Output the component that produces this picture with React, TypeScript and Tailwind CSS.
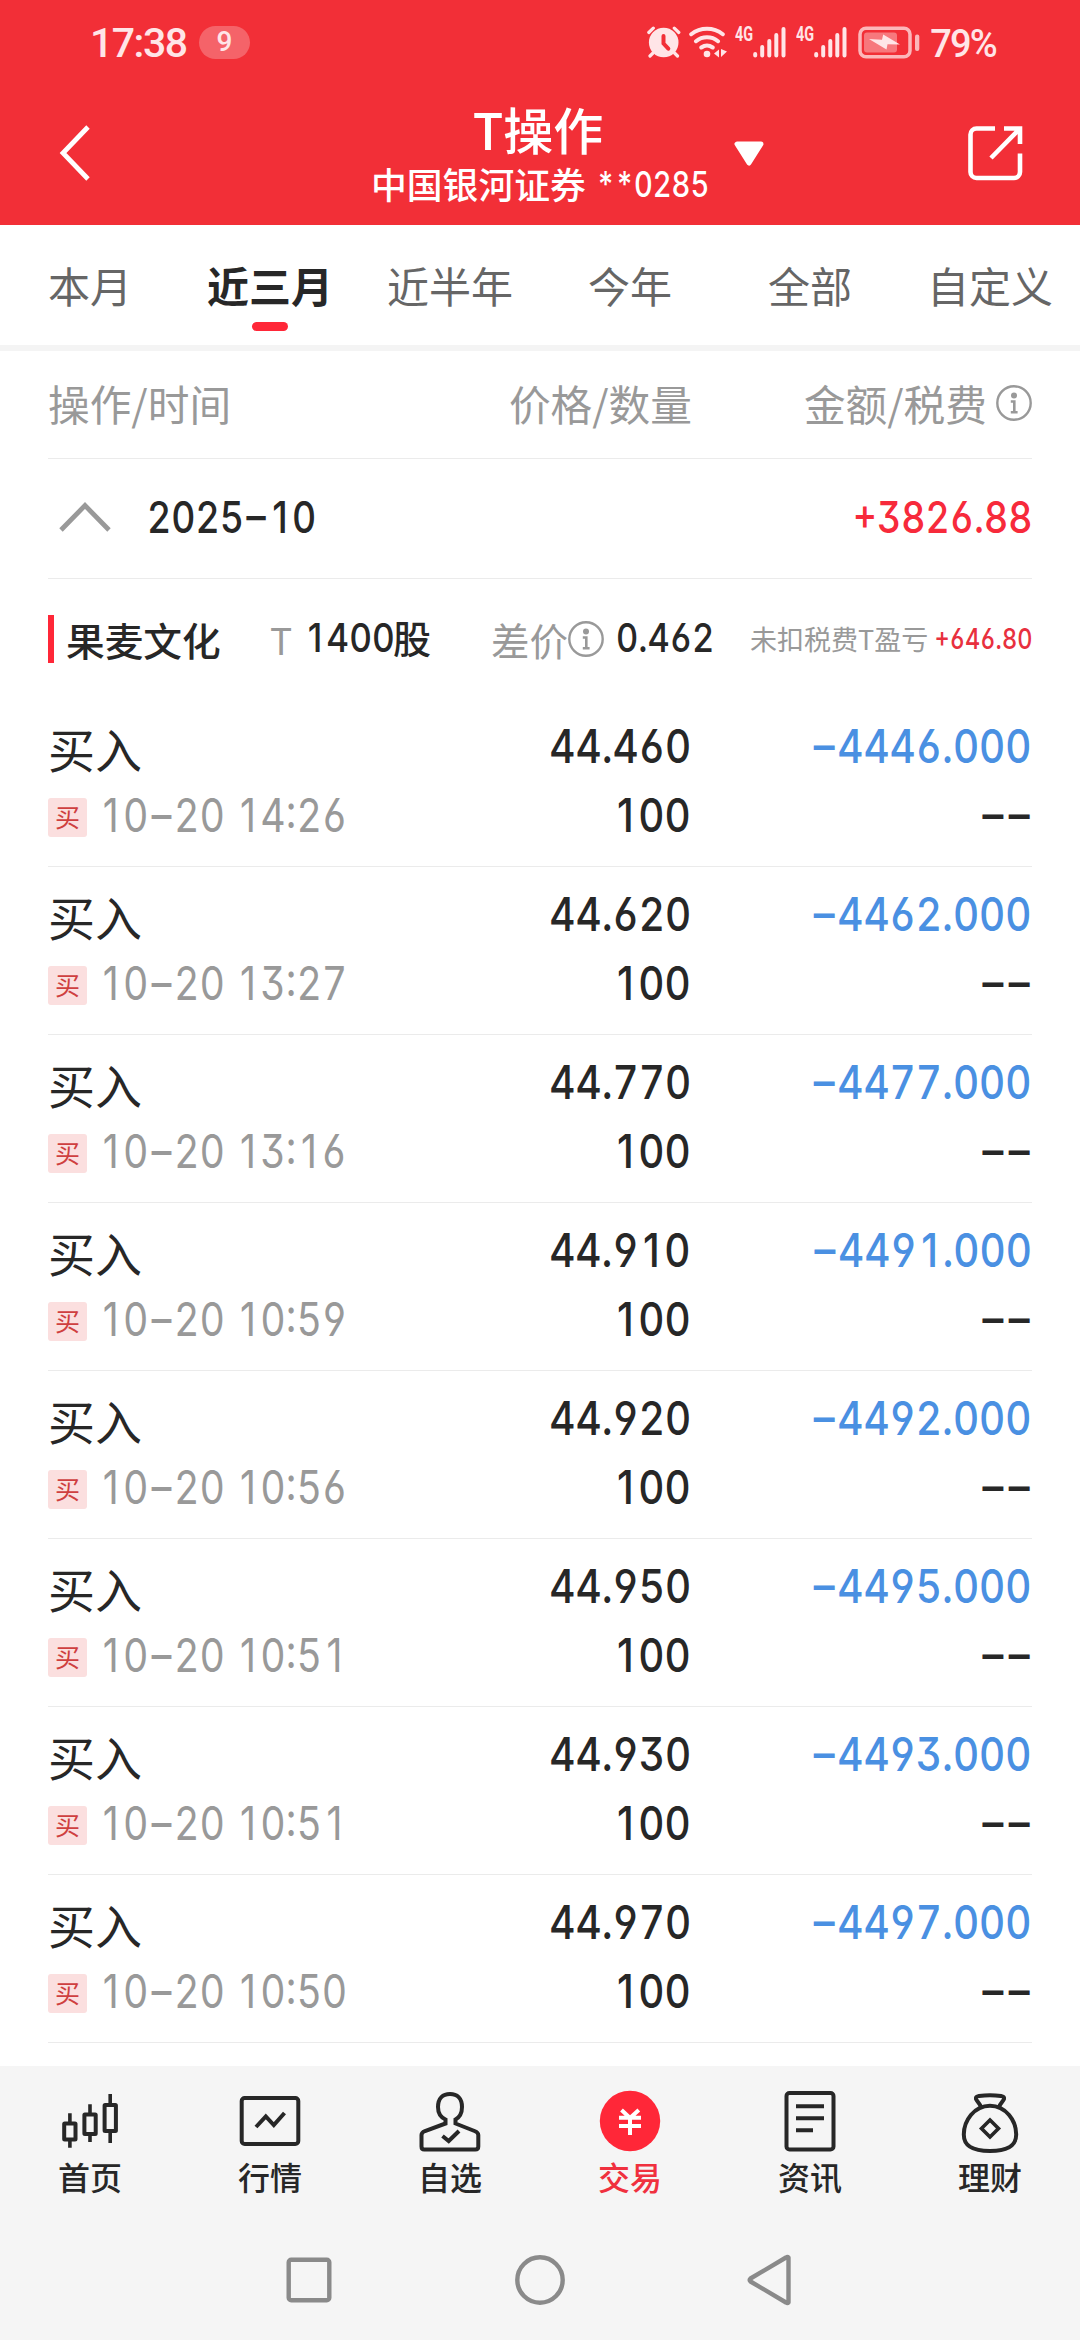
import React from "react";

const CJK = "font-['Noto_Sans_CJK_SC',sans-serif]";
const SYS = "font-['Roboto','Noto_Sans_CJK_SC',sans-serif]";

function Num({ text, className }: { text: string; className: string }) {
  return (
    <span
      className={`inline-block shrink-0 whitespace-nowrap leading-none font-['Inter','Noto_Sans_CJK_SC',sans-serif] [font-feature-settings:'tnum','cv03','cv04','cv09'] ${className}`}
    >
      {text.split(/([1−])/).map((part, i) => {
        if (part === "1")
          return (
            <span key={i} className="inline-block w-[0.635em] pr-[0.11em] text-right [font-feature-settings:'tnum'_0]">
              1
            </span>
          );
        if (part === "−")
          return (
            <span key={i} className="inline-block -translate-y-[0.035em] scale-x-[1.1]">
              −
            </span>
          );
        return part;
      })}
    </span>
  );
}

const tabs = ["本月", "近三月", "近半年", "今年", "全部", "自定义"];

const trades = [
  { time: "10−20 14:26", price: "44.460", amount: "−4446.000" },
  { time: "10−20 13:27", price: "44.620", amount: "−4462.000" },
  { time: "10−20 13:16", price: "44.770", amount: "−4477.000" },
  { time: "10−20 10:59", price: "44.910", amount: "−4491.000" },
  { time: "10−20 10:56", price: "44.920", amount: "−4492.000" },
  { time: "10−20 10:51", price: "44.950", amount: "−4495.000" },
  { time: "10−20 10:51", price: "44.930", amount: "−4493.000" },
  { time: "10−20 10:50", price: "44.970", amount: "−4497.000" },
];

function InfoIcon() {
  return (
    <svg width="36" height="36" viewBox="0 0 36 36" fill="none" stroke="#999" className="shrink-0">
      <circle cx="18" cy="18" r="16.7" strokeWidth="2.4" />
      <circle cx="18" cy="10.6" r="3" fill="#999" stroke="none" />
      <path d="M14.8 16.5h3.500v11M14.800 27.300h6.800" strokeWidth="2.6" />
    </svg>
  );
}

function Signal() {
  return (
    <div className="flex h-[31px]">
      <span className={`${SYS} w-[18px] origin-left scale-x-[0.72] text-[20px] leading-[14px] font-bold`}>4G</span>
      <svg width="33" height="31" viewBox="0 0 33 31" stroke="currentColor" strokeWidth="4" strokeLinecap="round">
        <path d="M2.2 27v1.4M9.2 20v8.4M16.3 14v14.4M23.3 8v20.4M30.5 2v26.4" />
      </svg>
    </div>
  );
}

function StatusBar() {
  return (
    <div className={`${SYS} flex h-[84px] items-center pl-[90px] pr-[84px] text-[#ffe5e7]`}>
      <span className="w-[109px] pt-[3px] text-[41px] leading-none font-medium tracking-[-1.5px]">17:38</span>
      <span className="flex h-[33px] w-[51px] items-center justify-center rounded-full bg-white/25 text-[28px] leading-none font-medium">
        9
      </span>
      <div className="ml-auto flex items-center">
        <svg width="34" height="32" viewBox="0 0 34 32" fill="currentColor" className="mr-[8px]">
          <circle cx="16.7" cy="16.5" r="14.8" />
          <path d="M6 27l-3 3M27.5 27l3 3M1.8 6.5l4.5-4.3M31.8 6.5l-4.5-4.3" stroke="currentColor" strokeWidth="3.2" strokeLinecap="round" />
          <path d="M16.500 10v7.500l4.800 5.200" stroke="#f22f37" strokeWidth="4" fill="none" strokeLinecap="round" />
        </svg>
        <svg width="38" height="32" viewBox="0 0 38 32" fill="none" stroke="currentColor" strokeWidth="4" strokeLinecap="round" className="mr-[8px]">
          <path d="M2.200 8.200A25.500 25.500 0 0 1 33.800 8.200M7 15.200A17.500 17.500 0 0 1 29 15.200M12.300 21.500A10 10 0 0 1 23.700 21.500" />
          <circle cx="18" cy="28" r="3.300" fill="currentColor" stroke="none" />
          <path d="M25 27.500l5-4v8zM32 23v8l6-5.500z" fill="currentColor" stroke="none" />
        </svg>
        <Signal />
        <div className="w-[10px]" />
        <Signal />
        <svg width="62" height="33" viewBox="0 0 62 33" className="mr-[10px] ml-[11px]">
          <rect x="2" y="2.200" width="50" height="28.600" rx="6" fill="none" stroke="currentColor" strokeOpacity=".75" strokeWidth="3.500" />
          <rect x="6" y="6.500" width="33" height="20" rx="3" fill="currentColor" fillOpacity=".4" />
          <path d="M11 13L24 13.800L25.200 8.500L42 18.500L29.500 18.300L28.500 23.500z" fill="currentColor" />
          <rect x="57" y="8.500" width="4.300" height="16.500" rx="2" fill="currentColor" fillOpacity=".75" />
        </svg>
        <span className="pt-[3px] text-[38px] leading-none font-medium tracking-[-1.8px]">79%</span>
      </div>
    </div>
  );
}

function Header() {
  return (
    <header className="h-[225px] shrink-0 bg-[#f22f37] text-white">
      <StatusBar />
      <div className="flex h-[141px] justify-between pr-[57px] pl-[58px]">
        <svg width="34" height="56" viewBox="0 0 34 56" fill="none" stroke="currentColor" strokeWidth="4.800" className="mt-[41px]">
          <path d="M30 2L5 28L30 54" />
        </svg>
        <div className="relative flex w-[360px] flex-col items-center pl-[20px]">
          <div className={`${CJK} mt-[17px] h-[54px] pr-[4px] text-[50px] leading-[54px] font-medium`}>T操作</div>
          <div className="mt-[7px] flex h-[44px] w-[338px] items-center">
            <span className={`${CJK} w-[222px] shrink-0 text-[35.800px] leading-none font-medium whitespace-nowrap`}>中国银河证券</span>
            <Num text="**0285" className="origin-left scale-x-[0.83] pl-[4px] text-[35px] font-medium" />
          </div>
          <svg width="30" height="25" viewBox="0 0 30 25" className="absolute top-[57px] left-[384px]">
            <path d="M3 3h24L15 22z" fill="white" stroke="white" strokeWidth="5" strokeLinejoin="round" />
          </svg>
        </div>
        <svg width="55" height="55" viewBox="0 0 55 55" fill="none" stroke="currentColor" strokeWidth="4.600" className="mt-[42px]">
          <path d="M27 2.500H8.500a6 6 0 0 0-6 6V46a6 6 0 0 0 6 6H46a6 6 0 0 0 6-6V27.500M36 2.500h16V18M52 2.500L23 32" />
        </svg>
      </div>
    </header>
  );
}

function Trade({ t }: { t: (typeof trades)[number] }) {
  return (
    <div className="grid h-[168px] grid-cols-[300px_343px_1fr] border-b border-[#ebebeb]">
      <div className="flex flex-col">
        <div className={`${CJK} mt-[24px] h-[50px] text-[47px] leading-[50px] text-[#272727]`}>买入</div>
        <div className="mt-[22px] flex h-[44px] items-center">
          <span className={`${CJK} flex size-[39px] shrink-0 items-center justify-center rounded-[3px] bg-[#fbdfdf] text-[25px] leading-none text-[#cf3f40]`}>
            <span className="-mt-[2px]">买</span>
          </span>
          <Num text={t.time} className="-mt-[3px] ml-[11px] origin-left scale-x-[0.845] text-[46.500px] text-[#999]" />
        </div>
      </div>
      <div className="flex flex-col items-end text-[#272727]">
        <Num text={t.price} className="mt-[24px] h-[47px] origin-right scale-x-[0.870] text-[46.500px] font-medium" />
        <Num text="100" className="mt-[22px] origin-right scale-x-[0.870] text-[46.500px] font-medium" />
      </div>
      <div className="flex flex-col items-end text-[#4a90e2]">
        <Num text={t.amount} className="mt-[24px] h-[47px] origin-right scale-x-[0.870] text-[46.500px] font-medium" />
        <Num text="−−" className="mt-[22px] origin-right scale-x-[0.870] text-[46.500px] font-medium text-[#272727]" />
      </div>
    </div>
  );
}

const navItems: { label: string; active?: boolean; icon: React.ReactNode }[] = [
  {
    label: "首页",
    icon: (
      <>
        <rect x="10.200" y="37.500" width="11.300" height="16" rx="0.500" />
        <rect x="30.400" y="28.500" width="11.300" height="19.500" rx="0.500" />
        <rect x="50.600" y="19" width="11.300" height="26" rx="0.500" />
        <path d="M15.900 27.300V37M15.900 54v7.700M36 18.300V28M36 48v8M56.200 8v11M56.200 45v12" strokeWidth="3.600" />
      </>
    ),
  },
  {
    label: "行情",
    icon: (
      <>
        <rect x="7.700" y="12" width="56.600" height="46" rx="3" />
        <path d="M22 41L31.800 30.500L39.800 39L50.500 27" />
      </>
    ),
  },
  {
    label: "自选",
    icon: (
      <>
        <path d="M31.500 36.500V33.500C26 31 24 27 24 21C24 12 29 8 36 8C43 8 48 12 48 21C48 27 46 31 41.500 33.500V37.500L60.500 45Q64.300 46.500 64.300 49V60.500Q64.300 63.500 61.300 63.500H10.200Q7.500 63.500 7.500 60.500V49Q7.500 46.500 11 45L31.500 37.500V36" />
        <path d="M28.500 50L34.700 55L45 45" />
      </>
    ),
  },
  {
    label: "交易",
    active: true,
    icon: (
      <>
        <circle cx="36" cy="35" r="30.200" fill="#ff2738" stroke="none" />
        <path d="M27.500 24L36 32L44.800 24M25 31.800h22M25 40h22M36 31v18" stroke="#fff" />
      </>
    ),
  },
  {
    label: "资讯",
    icon: (
      <>
        <rect x="12.500" y="7" width="47" height="56.500" rx="3" />
        <path d="M22 20.300h28M22 32.300h28M22 44.200h17" />
      </>
    ),
  },
  {
    label: "理财",
    icon: (
      <>
        <path d="M27 21C25.500 17 23 15.500 22 13C21.500 10.500 23 10.500 25 10C32 9 40 9 47 10C49 10.500 50.500 10.500 50 13C49 15.500 46.500 17 45 21" />
        <path d="M36 19.800C20 19.800 9.800 35 9.800 48.500C9.800 60 18 65 36 65C54 65 62.200 60 62.200 48.500C62.200 35 52 19.800 36 19.800Z" />
        <path d="M36 34L44.500 42.400L36 51L27.500 42.400Z" strokeWidth="3.600" />
      </>
    ),
  },
];

export default function App() {
  return (
    <div className="flex h-[2340px] w-[1080px] flex-col overflow-hidden bg-white">
      <Header />

      <nav className={`${CJK} grid h-[126px] shrink-0 grid-cols-6 border-b-[6px] border-[#f4f4f4] text-[42px] text-[#666]`}>
        {tabs.map((t, i) => (
          <div key={t} className="relative flex h-[118px] items-center justify-center">
            {i === 1 ? (
              <>
                <span className="font-bold text-[#272727]">{t}</span>
                <span className="absolute top-[97px] left-[72px] h-[9px] w-[36px] rounded-full bg-[#ff2738]" />
              </>
            ) : (
              <span>{t}</span>
            )}
          </div>
        ))}
      </nav>

      <main className="h-[1715px] shrink-0 px-[48px]">
        <div className={`${CJK} grid h-[108px] grid-cols-[300px_344px_1fr] items-center border-b border-[#ebebeb] pb-[2px] text-[41.700px] leading-none text-[#999]`}>
          <span>操作/时间</span>
          <span className="text-right">价格/数量</span>
          <span className="flex items-center justify-end gap-[9px]">
            金额/税费
            <InfoIcon />
          </span>
        </div>

        <div className="flex h-[120px] items-center border-b border-[#ebebeb] pb-[3px]">
          <svg width="52" height="30" viewBox="0 0 52 30" fill="none" stroke="#999" strokeWidth="4.800" className="ml-[11px]">
            <path d="M2 28L26 3.500L50 28" />
          </svg>
          <Num text="2025−10" className="ml-[36px] origin-left scale-x-[0.850] text-[44px] font-medium text-[#272727]" />
          <Num text="+3826.88" className="ml-auto origin-right scale-x-[0.850] text-[44px] font-medium text-[#f72a3b]" />
        </div>

        <div className={`${CJK} flex h-[120px] items-center leading-none whitespace-nowrap text-[#272727]`}>
          <span className="h-[48px] w-[6px] shrink-0 bg-[#ff2738]" />
          <span className="ml-[12px] w-[204px] shrink-0 text-[38.700px] font-medium">果麦文化</span>
          <span className="w-[34px] shrink-0 text-[37px] text-[#999]">T</span>
          <Num text="1400" className="-mt-[2px] w-[89px] origin-left scale-x-[0.880] text-[40px] font-medium" />
          <span className="-mt-[4px] w-[98px] shrink-0 text-[38px] font-medium">股</span>
          <span className="w-[77px] shrink-0 text-[38.500px] text-[#999]">差价</span>
          <InfoIcon />
          <Num text="0.462" className="-mt-[2px] ml-[12px] w-[134px] origin-left scale-x-[0.860] text-[40px] font-medium" />
          <span className="-mt-[2px] shrink-0 text-[27px] text-[#999]">未扣税费T盈亏</span>
          <div className="ml-auto flex w-[104px] justify-end">
            <Num text="+646.80" className="-mt-[1px] origin-right scale-x-[0.840] text-[28px] font-medium text-[#e8303e]" />
          </div>
        </div>

        {trades.map((t, i) => (
          <Trade key={i} t={t} />
        ))}
      </main>

      <footer className="h-[274px] shrink-0 bg-[#f5f5f5]">
        <div className="grid h-[154px] grid-cols-6">
          {navItems.map((n) => (
            <div key={n.label} className="flex flex-col items-center pt-[20px]">
              <svg width="72" height="72" viewBox="0 0 72 72" fill="none" stroke="#272727" strokeWidth="4">
                {n.icon}
              </svg>
              <span className={`${CJK} text-[32px] leading-[36px] font-medium ${n.active ? "text-[#f0303e]" : "text-[#272727]"}`}>
                {n.label}
              </span>
            </div>
          ))}
        </div>
        <div className="flex h-[120px] items-center justify-center gap-[180px]">
          <svg width="50" height="52" viewBox="0 0 50 52" fill="none" stroke="#8a8a8a" strokeWidth="4.400">
            <rect x="4.700" y="5.700" width="40.600" height="40.600" rx="2.500" />
          </svg>
          <svg width="52" height="52" viewBox="0 0 52 52" fill="none" stroke="#8a8a8a" strokeWidth="4.400">
            <circle cx="26" cy="26" r="22.700" />
          </svg>
          <svg width="50" height="52" viewBox="0 0 50 52" fill="none" stroke="#8a8a8a" strokeWidth="4.400" strokeLinejoin="round">
            <path d="M42.500 3.500v45q-1 1-2.500 0L4.500 27.500q-1.500-1.500 0-3L40 3.500q1.500-1 2.500 0z" />
          </svg>
        </div>
      </footer>
    </div>
  );
}
